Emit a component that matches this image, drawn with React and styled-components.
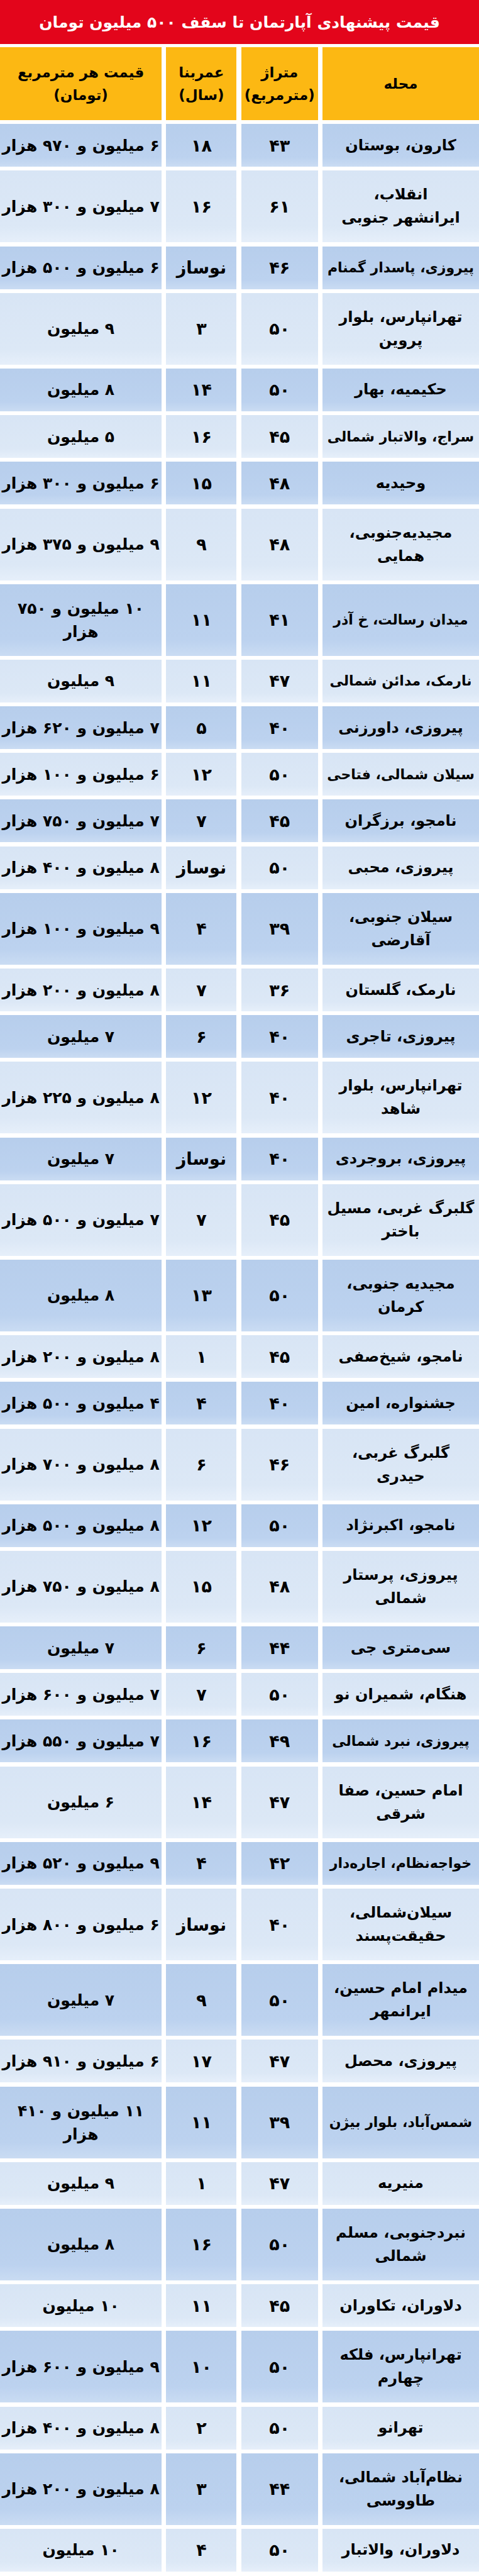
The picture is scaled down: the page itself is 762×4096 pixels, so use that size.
import React from "react";
import styled, { createGlobalStyle } from "styled-components";

const Global = createGlobalStyle`
  html, body { margin: 0; padding: 0; background: #ffffff; }
  body { font-family: "DejaVu Sans", sans-serif; }
`;

const Page = styled.div`
  width: 762px;
  direction: rtl;
  display: flex;
  flex-direction: column;
  background: #ffffff;
`;

const Title = styled.h1`
  margin: 0;
  height: 70px;
  background: #e3051b;
  color: #ffffff;
  display: flex;
  align-items: center;
  justify-content: center;
  font-family: "DejaVu Sans", sans-serif;
  font-weight: bold;
  font-size: 25px;
  line-height: 1;
  white-space: nowrap;
`;

const Table = styled.div`
  display: flex;
  flex-direction: column;
  gap: 6.2px;
  margin-top: 5px;
`;

const Row = styled.div`
  display: grid;
  grid-template-columns: 249px 122px 112px 1fr;
  column-gap: 7.3px;
  height: ${(p) => p.$h}px;
`;

const Cell = styled.div`
  display: flex;
  flex-direction: column;
  align-items: center;
  justify-content: center;
  overflow: hidden;
  white-space: nowrap;
  color: #000000;
  font-family: "DejaVu Sans", sans-serif;
  font-weight: bold;
  font-size: ${(p) => p.$size || 25}px;
  line-height: 37px;
  background: ${(p) =>
    p.$dark
      ? "linear-gradient(to bottom, #b7ceec 0%, #bcd2ef 78%, #cadcf3 100%)"
      : "linear-gradient(to bottom, #d8e5f5 0%, #dce8f6 78%, #e6effa 100%)"};
`;

const HeadCell = styled(Cell)`
  background: #fcb813;
  font-size: 23px;
  line-height: 36px;
`;

const Line = styled.span`
  display: block;
`;

const rows = [
  [["کارون، بوستان"], "۴۳", "۱۸", ["۶ میلیون و ۹۷۰ هزار"]],
  [["انقلاب،", "ایرانشهر جنوبی"], "۶۱", "۱۶", ["۷ میلیون و ۳۰۰ هزار"]],
  [["پیروزی، پاسدار گمنام"], "۴۶", "نوساز", ["۶ میلیون و ۵۰۰ هزار"]],
  [["تهرانپارس، بلوار", "پروین"], "۵۰", "۳", ["۹ میلیون"]],
  [["حکیمیه، بهار"], "۵۰", "۱۴", ["۸ میلیون"]],
  [["سراج، والاتبار شمالی"], "۴۵", "۱۶", ["۵ میلیون"]],
  [["وحیدیه"], "۴۸", "۱۵", ["۶ میلیون و ۳۰۰ هزار"]],
  [["مجیدیه‌جنوبی،", "همایی"], "۴۸", "۹", ["۹ میلیون و ۳۷۵ هزار"]],
  [["میدان رسالت، خ آذر"], "۴۱", "۱۱", ["۱۰ میلیون و ۷۵۰", "هزار"]],
  [["نارمک، مدائن شمالی"], "۴۷", "۱۱", ["۹ میلیون"]],
  [["پیروزی، داورزنی"], "۴۰", "۵", ["۷ میلیون و ۶۲۰ هزار"]],
  [["سیلان شمالی، فتاحی"], "۵۰", "۱۲", ["۶ میلیون و ۱۰۰ هزار"]],
  [["نامجو، برزگران"], "۴۵", "۷", ["۷ میلیون و ۷۵۰ هزار"]],
  [["پیروزی، محبی"], "۵۰", "نوساز", ["۸ میلیون و ۴۰۰ هزار"]],
  [["سیلان جنوبی،", "آقارضی"], "۳۹", "۴", ["۹ میلیون و ۱۰۰ هزار"]],
  [["نارمک، گلستان"], "۳۶", "۷", ["۸ میلیون و ۲۰۰ هزار"]],
  [["پیروزی، تاجری"], "۴۰", "۶", ["۷ میلیون"]],
  [["تهرانپارس، بلوار", "شاهد"], "۴۰", "۱۲", ["۸ میلیون و ۲۲۵ هزار"]],
  [["پیروزی، بروجردی"], "۴۰", "نوساز", ["۷ میلیون"]],
  [["گلبرگ غربی، مسیل", "باختر"], "۴۵", "۷", ["۷ میلیون و ۵۰۰ هزار"]],
  [["مجیدیه جنوبی،", "کرمان"], "۵۰", "۱۳", ["۸ میلیون"]],
  [["نامجو، شیخ‌صفی"], "۴۵", "۱", ["۸ میلیون و ۲۰۰ هزار"]],
  [["جشنواره، امین"], "۴۰", "۴", ["۴ میلیون و ۵۰۰ هزار"]],
  [["گلبرگ غربی،", "حیدری"], "۴۶", "۶", ["۸ میلیون و ۷۰۰ هزار"]],
  [["نامجو، اکبرنژاد"], "۵۰", "۱۲", ["۸ میلیون و ۵۰۰ هزار"]],
  [["پیروزی، پرستار", "شمالی"], "۴۸", "۱۵", ["۸ میلیون و ۷۵۰ هزار"]],
  [["سی‌متری جی"], "۴۴", "۶", ["۷ میلیون"]],
  [["هنگام، شمیران نو"], "۵۰", "۷", ["۷ میلیون و ۶۰۰ هزار"]],
  [["پیروزی، نبرد شمالی"], "۴۹", "۱۶", ["۷ میلیون و ۵۵۰ هزار"]],
  [["امام حسین، صفا", "شرقی"], "۴۷", "۱۴", ["۶ میلیون"]],
  [["خواجه‌نظام، اجاره‌دار"], "۴۲", "۴", ["۹ میلیون و ۵۲۰ هزار"]],
  [["سیلان‌شمالی،", "حقیقت‌پسند"], "۴۰", "نوساز", ["۶ میلیون و ۸۰۰ هزار"]],
  [["میدام امام حسین،", "ایرانمهر"], "۵۰", "۹", ["۷ میلیون"]],
  [["پیروزی، محصل"], "۴۷", "۱۷", ["۶ میلیون و ۹۱۰ هزار"]],
  [["شمس‌آباد، بلوار بیژن"], "۳۹", "۱۱", ["۱۱ میلیون و ۴۱۰", "هزار"]],
  [["منیریه"], "۴۷", "۱", ["۹ میلیون"]],
  [["نبردجنوبی، مسلم", "شمالی"], "۵۰", "۱۶", ["۸ میلیون"]],
  [["دلاوران، تکاوران"], "۴۵", "۱۱", ["۱۰ میلیون"]],
  [["تهرانپارس، فلکه", "چهارم"], "۵۰", "۱۰", ["۹ میلیون و ۶۰۰ هزار"]],
  [["تهرانو"], "۵۰", "۲", ["۸ میلیون و ۴۰۰ هزار"]],
  [["نظام‌آباد شمالی،", "طاووسی"], "۴۴", "۳", ["۸ میلیون و ۲۰۰ هزار"]],
  [["دلاوران، والاتبار"], "۵۰", "۴", ["۱۰ میلیون"]],
];

const Lines = ({ items }) =>
  items.map((t, i) => <Line key={i}>{t}</Line>);

const nameSize = (lines) => {
  const longest = Math.max(...lines.map((l) => l.length));
  return longest > 17 ? 22 : 24;
};

export default function App() {
  return (
    <Page>
      <Global />
      <Title>قیمت پیشنهادی آپارتمان تا سقف ۵۰۰ میلیون تومان</Title>
      <Table>
        <Row $h={116}>
          <HeadCell>محله</HeadCell>
          <HeadCell>
            <Lines items={["متراژ", "(مترمربع)"]} />
          </HeadCell>
          <HeadCell>
            <Lines items={["عمربنا", "(سال)"]} />
          </HeadCell>
          <HeadCell>
            <Lines items={["قیمت هر مترمربع", "(تومان)"]} />
          </HeadCell>
        </Row>
        {rows.map(([name, area, age, price], i) => {
          const tall = name.length > 1 || price.length > 1;
          const dark = i % 2 === 0;
          return (
            <Row key={i} $h={tall ? 114 : 68}>
              <Cell $dark={dark} $size={nameSize(name)}>
                <Lines items={name} />
              </Cell>
              <Cell $dark={dark} $size={27}>{area}</Cell>
              <Cell $dark={dark} $size={27}>{age}</Cell>
              <Cell $dark={dark} $size={25}>
                <Lines items={price} />
              </Cell>
            </Row>
          );
        })}
      </Table>
    </Page>
  );
}
